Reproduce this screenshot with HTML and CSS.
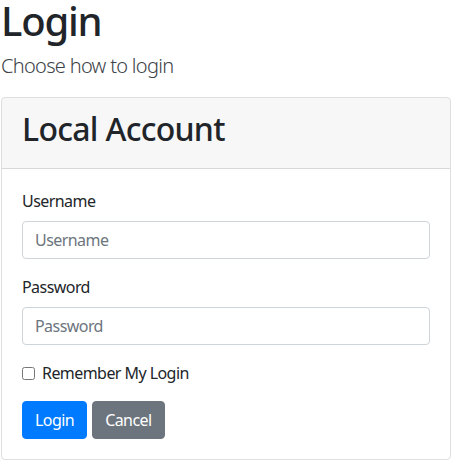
FILE: index.html
```html
<!DOCTYPE html>
<html lang="en">
<head>
<meta charset="utf-8">
<title>Login</title>
<link rel="stylesheet" href="styles.css">
</head>
<body>
<div class="page">
  <div class="lead-block">
    <h1 class="title">Login</h1>
    <p class="lead">Choose how to login</p>
  </div>
  <div class="card">
    <div class="card-header">
      <h2 class="card-title">Local Account</h2>
    </div>
    <div class="card-body">
      <form class="form">
        <div class="form-group">
          <label class="label" for="username">Username</label>
          <input class="form-control" id="username" placeholder="Username">
        </div>
        <div class="form-group">
          <label class="label" for="password">Password</label>
          <input class="form-control" id="password" type="password" placeholder="Password">
        </div>
        <div class="form-group form-check">
          <input class="check-input" type="checkbox" id="remember">
          <label class="check-label" for="remember">Remember My Login</label>
        </div>
        <div class="buttons">
          <button class="btn btn-primary" type="button">Login</button>
          <button class="btn btn-secondary" type="button">Cancel</button>
        </div>
      </form>
    </div>
  </div>
</div>
</body>
</html>
```
FILE: styles.css
```css
html, body {
  margin: 0;
  padding: 0;
  background: #fff;
}
body {
  font-family: "Noto Sans", "Open Sans", sans-serif;
  font-size: 16px;
  line-height: 1.5;
  color: #212529;
  letter-spacing: -0.035em;
}
.page {
  width: 453px;
}
.title {
  font-size: 40px;
  font-weight: 500;
  line-height: 41px;
  letter-spacing: -0.03em;
  margin: 0 0 10px 1px;
}
.lead {
  font-size: 20px;
  font-weight: 300;
  line-height: 30px;
  color: #3c4248;
  letter-spacing: -0.035em;
  margin: 0 0 16px 1px;
}
.card {
  margin-left: 1px;
  width: 450px;
  box-sizing: border-box;
  border: 1px solid rgba(0,0,0,.125);
  border-radius: 4px;
  overflow: hidden;
}
.card-header {
  background: rgba(0,0,0,.03);
  border-bottom: 1px solid rgba(0,0,0,.125);
  padding: 12px 20px;
}
.card-title {
  font-size: 32px;
  font-weight: 500;
  line-height: 1.2;
  letter-spacing: -0.022em;
  margin: 0 0 8px 0;
}
.card-body {
  padding: 20px;
}
.form-group {
  margin-bottom: 16px;
}
.label {
  display: inline-block;
  margin-bottom: 8px;
}
.form-control {
  display: block;
  width: 100%;
  box-sizing: border-box;
  height: 38px;
  padding: 6px 12px;
  font-family: inherit;
  font-size: 16px;
  line-height: 1.5;
  letter-spacing: -0.035em;
  color: #495057;
  background: #fff;
  border: 1px solid #ced4da;
  border-radius: 4px;
}
.form-control::placeholder {
  color: #6c757d;
  opacity: 1;
}
.form-check {
  display: flex;
  align-items: center;
  gap: 7px;
}
.check-input {
  margin: 0;
  width: 13px;
  height: 13px;
}
.check-label {
  margin: 0;
}
.buttons {
  display: flex;
  gap: 5px;
}
.btn {
  font-family: inherit;
  font-size: 16px;
  line-height: 1.5;
  letter-spacing: -0.035em;
  padding: 6px 12px;
  border: 1px solid transparent;
  border-radius: 4px;
  color: #fff;
}
.btn-primary {
  background: #007bff;
  border-color: #007bff;
}
.btn-secondary {
  background: #6c757d;
  border-color: #6c757d;
}
```
